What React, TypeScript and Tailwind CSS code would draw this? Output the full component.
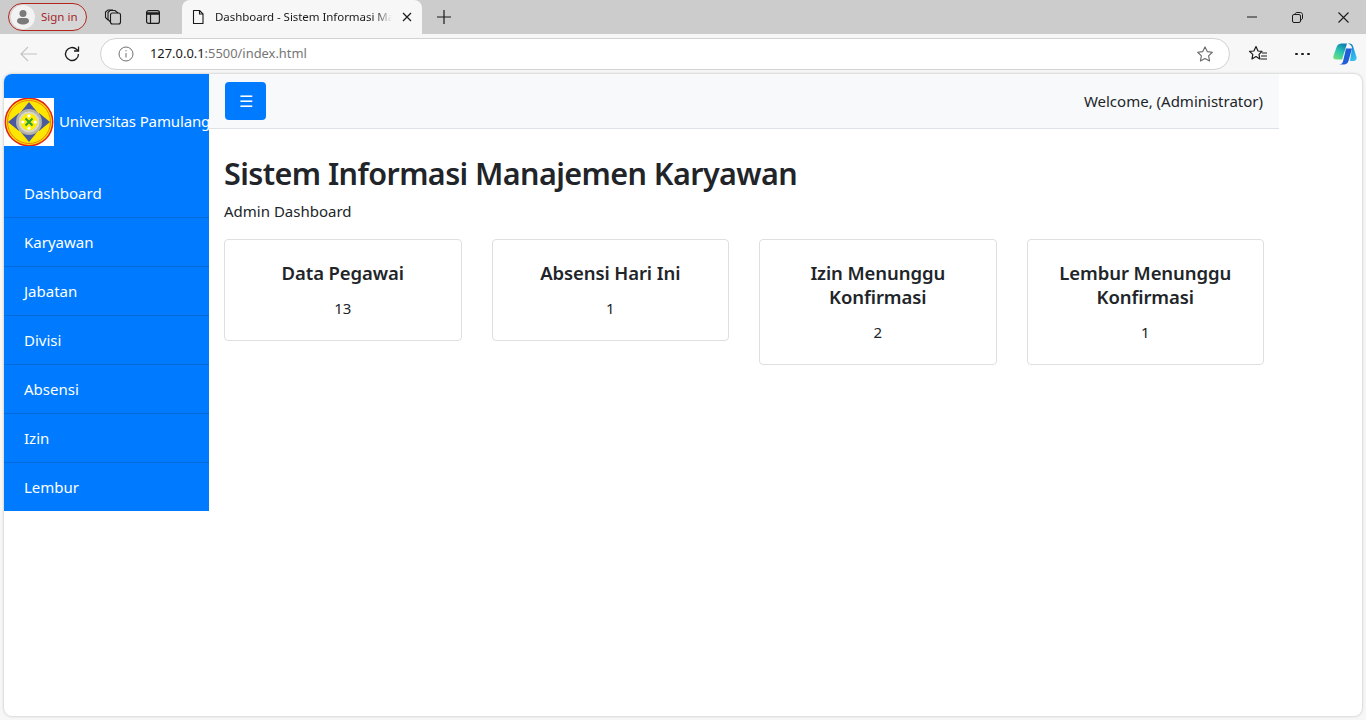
import React from "react";

const menuItems = ["Dashboard", "Karyawan", "Jabatan", "Divisi", "Absensi", "Izin", "Lembur"];

const cards = [
  { title: "Data Pegawai", value: "13" },
  { title: "Absensi Hari Ini", value: "1" },
  { title: "Izin Menunggu Konfirmasi", value: "2" },
  { title: "Lembur Menunggu Konfirmasi", value: "1" },
];

function Logo() {
  return (
    <svg width="50" height="48" viewBox="0 0 50 48" className="shrink-0 bg-white">
      <circle cx="25" cy="24" r="24.500" fill="#e2231a" />
      <circle cx="25" cy="24" r="23" fill="#ffe600" />
      <circle cx="25" cy="24" r="21.500" fill="none" stroke="#e8641a" strokeWidth="0.800" />
      <polygon points="25,4 34,15 16,15" fill="#4a5a9c" />
      <polygon points="25,44 34,33 16,33" fill="#4a5a9c" />
      <polygon points="4,24 15,15 15,33" fill="#4a5a9c" />
      <polygon points="46,24 35,15 35,33" fill="#4a5a9c" />
      <circle cx="25" cy="24" r="13" fill="#b5b3a6" />
      <circle cx="25" cy="24" r="10.500" fill="#d9d7c8" />
      <circle cx="25" cy="24" r="8.500" fill="#ffee00" />
      <path d="M21.500 20.500 L28.500 27.500 M28.500 20.500 L21.500 27.500" stroke="#2f9e35" strokeWidth="2" />
      <circle cx="25" cy="17.800" r="1.600" fill="#ffffff" />
      <circle cx="25" cy="30.200" r="1.600" fill="#ffffff" />
      <circle cx="18.800" cy="24" r="1.600" fill="#ffffff" />
      <circle cx="31.200" cy="24" r="1.600" fill="#ffffff" />
    </svg>
  );
}

function CopilotIcon() {
  return (
    <svg width="24" height="24" viewBox="0 0 24 24">
      <defs>
        <linearGradient id="copA" x1="0.700" y1="0" x2="0.200" y2="1">
          <stop offset="0" stopColor="#0f7fb4" />
          <stop offset="0.500" stopColor="#2cc6b0" />
          <stop offset="1" stopColor="#6ee07a" />
        </linearGradient>
        <linearGradient id="copB" x1="0.300" y1="0" x2="0.800" y2="1">
          <stop offset="0" stopColor="#0e6fb8" />
          <stop offset="0.500" stopColor="#1fa6ea" />
          <stop offset="1" stopColor="#3cc4f0" />
        </linearGradient>
      </defs>
      <path d="M8.500 1.500H14L9 17.500H2.800C1 17.500-.2 15.800.400 14L3.800 4.500C4.500 2.700 6.500 1.500 8.500 1.500z" fill="url(#copA)" />
      <path d="M14 1.500h2.500c1.700 0 3 1 3.500 2.500L23.500 15c.6 2-.9 4-3 4H17L19 6.500C19.300 4 16.500 1.500 14 1.500z" fill="url(#copB)" />
      <path d="M13 6.500h6L15.500 19c-.6 2.200-2.400 3.500-4.500 3.500H6c2 0 3.500-1.300 4-3z" fill="#1e5fd8" />
    </svg>
  );
}

function BrowserChrome() {
  return (
    <div className="text-[#1a1a1a]">
      <div className="flex h-[34px] items-end bg-[#cccccc]">
        <div className="flex h-[34px] w-[182px] items-center pl-2">
          <div className="flex h-[28px] w-[79px] items-center gap-[6px] rounded-full border border-[#b3261e] bg-[#d6d6d6] pl-[2px]">
            <span className="flex h-[24px] w-[24px] items-center justify-center rounded-full bg-[#f2f2f2]">
              <svg width="16" height="16" viewBox="0 0 16 16" fill="#7a7a7a">
                <circle cx="8" cy="4.500" r="3.500" />
                <path d="M2 12c0-2 1.500-3 3-3h6c1.500 0 3 1 3 3 0 2-3 3.500-6 3.500S2 14 2 12z" />
              </svg>
            </span>
            <span className="text-[11.500px] text-[#a4262c]">Sign in</span>
          </div>
          <svg width="20" height="20" viewBox="0 0 20 20" fill="none" stroke="#1a1a1a" strokeWidth="1.100" className="ml-[16px]">
            <rect x="7.500" y="6" width="10" height="11" rx="2" />
            <path d="M7.500 15 5 12.500V5.500L7 3.500h5l3 2.500" />
            <path d="M5 13 2.500 10.500V5L5 3h5" />
          </svg>
          <svg width="16" height="16" viewBox="0 0 16 16" fill="none" stroke="#1a1a1a" strokeWidth="1.200" className="ml-[22px]">
            <rect x="1.600" y="1.600" width="12.800" height="12.800" rx="2" />
            <path d="M1.600 4.500h12.800" strokeWidth="2.500" />
            <path d="M5.500 4.500v10" />
          </svg>
        </div>
        <div className="flex h-[34px] w-[240px] items-center rounded-t-[8px] bg-[#f7f7f7] pl-[8px]">
          <svg width="16" height="16" viewBox="0 0 16 16" fill="none" stroke="#1a1a1a" strokeWidth="1.100">
            <path d="M3.500 1.500h6l3.500 3.500v9.500h-9.500z" strokeLinejoin="round" />
            <path d="M9.500 1.500V5H13" />
          </svg>
          <span className="ml-[9px] w-[177px] whitespace-nowrap text-[11.500px] tracking-[-0.05px] [mask-image:linear-gradient(to_right,black_90%,transparent)]">
            Dashboard - Sistem Informasi Ma
          </span>
          <svg width="10" height="10" viewBox="0 0 10 10" stroke="#1a1a1a" strokeWidth="1.200" className="ml-[10px]">
            <path d="M1 1l8 8M9 1l-8 8" />
          </svg>
        </div>
        <svg width="14" height="14" viewBox="0 0 14 14" stroke="#1a1a1a" strokeWidth="1.200" className="mb-[10px] ml-[15px]">
          <path d="M7 0v14M0 7h14" />
        </svg>
        <div className="ml-auto flex h-[34px] items-center pr-[17px]">
          <svg width="10" height="10" viewBox="0 0 10 10" stroke="#1a1a1a" strokeWidth="1" className="mr-[1px]">
            <path d="M0 5h10" />
          </svg>
          <svg width="11" height="11" viewBox="0 0 11 11" fill="none" stroke="#1a1a1a" strokeWidth="1" className="ml-[34px]">
            <rect x="0.500" y="2.500" width="8" height="8" rx="1.500" />
            <path d="M3 2.500c0-1 .7-2 2-2h3.500c1 0 2 1 2 2V6c0 1.200-1 2-2 2" />
          </svg>
          <svg width="11" height="11" viewBox="0 0 11 11" stroke="#1a1a1a" strokeWidth="1.100" className="ml-[35px]">
            <path d="M.5.500l10 10M10.500.500l-10 10" />
          </svg>
        </div>
      </div>

      <div className="flex h-[40px] items-center bg-[#f7f7f7]">
        <svg width="18" height="16" viewBox="0 0 18 16" fill="none" stroke="#c4c4c4" strokeWidth="1.200" className="ml-[20px]">
          <path d="M17 8H1M8 1 1 8l7 7" />
        </svg>
        <svg width="18" height="18" viewBox="0 0 18 18" fill="none" stroke="#1a1a1a" strokeWidth="1.300" className="ml-[25px]">
          <path d="M15.500 9a6.500 6.500 0 1 1-2-4.700L15.500 6" />
          <path d="M15.500 1.500V6H11" />
        </svg>
        <div className="ml-[19px] flex h-[32px] w-[1130px] items-center rounded-full border border-[#d2d2d2] bg-white">
          <svg width="16" height="16" viewBox="0 0 16 16" fill="none" stroke="#707070" strokeWidth="1" className="ml-[17px]">
            <circle cx="8" cy="8" r="7" />
            <path d="M8 7v4.500M8 4.200v1.200" />
          </svg>
          <span className="ml-[16px] text-[12.900px]">
            127.0.0.1<span className="text-[#767676]">:5500/index.html</span>
          </span>
          <svg width="18" height="18" viewBox="0 0 24 24" fill="none" stroke="#6a6a6a" strokeWidth="1.500" strokeLinejoin="round" className="ml-auto mr-[15px]">
            <path d="M12 2.500l3 6.300 6.800.9-5 4.700 1.300 6.800-6.100-3.300-6.100 3.300 1.300-6.800-5-4.700 6.800-.9z" />
          </svg>
        </div>
        <svg width="20" height="18" viewBox="0 0 20 18" fill="none" stroke="#1a1a1a" strokeWidth="1.200" strokeLinejoin="round" className="ml-[18px]">
          <path d="M8 1.500l2 4.500 4 .4-3 3 .8 4.500-3.800-2.300-4 2.300.8-4.500-3.300-3 4.400-.4z" />
          <path d="M14 8h5M13 11h6M12.500 14h6.500" />
        </svg>
        <span className="ml-[27px] flex items-center gap-[2px]">
          <span className="h-[2.500px] w-[2.500px] rounded-full bg-[#1a1a1a]" />
          <span className="ml-[1.500px] h-[2.500px] w-[2.500px] rounded-full bg-[#1a1a1a]" />
          <span className="ml-[1.500px] h-[2.500px] w-[2.500px] rounded-full bg-[#1a1a1a]" />
        </span>
        <span className="ml-[23px]">
          <CopilotIcon />
        </span>
      </div>
    </div>
  );
}

export default function App() {
  return (
    <div className="flex h-[720px] w-[1366px] flex-col overflow-hidden bg-[#f7f7f7] font-['Noto_Sans',sans-serif]">
      <BrowserChrome />
      <div className="mx-[4px] mb-[4px] flex flex-1 items-start overflow-hidden rounded-[8px] bg-white shadow-[0_0_3px_rgba(0,0,0,0.25)]">
        <aside className="h-[437px] w-[205px] shrink-0 bg-[#007bff] text-white">
          <div className="flex items-center pt-[24px]">
            <Logo />
            <span className="mb-[2px] ml-[5px] whitespace-nowrap text-[15px] tracking-[-0.14px]">Universitas Pamulang</span>
          </div>
          <ul className="mt-[23px]">
            {menuItems.map((item, i) => (
              <li
                key={item}
                className={`flex h-[49px] items-center pl-[20px] text-[15px] ${
                  i < menuItems.length - 1 ? "border-b border-[#0069d9] pt-px" : ""
                }`}
              >
                {item}
              </li>
            ))}
          </ul>
        </aside>

        <main className="w-[1070px] shrink-0 text-[#212529]">
          <header className="flex h-[55px] items-center justify-between border-b border-[#dee2e6] bg-[#f8f9fa] px-[16px]">
            <button className="h-[38px] w-[41px] rounded-[4px] bg-[#007bff] text-[16px] text-white">☰</button>
            <span className="pt-[1px] text-[15px]">Welcome, (Administrator)</span>
          </header>
          <div className="px-[15px] pt-[25px]">
            <h1 className="text-[30.500px] font-semibold leading-[38px] tracking-[-0.57px]">
              Sistem Informasi Manajemen Karyawan
            </h1>
            <p className="mt-[7px] text-[15px] leading-[24px]">Admin Dashboard</p>
            <div className="mt-[16px] grid grid-cols-4 items-start gap-x-[30px]">
              {cards.map((card) => (
                <div key={card.title} className="rounded-[4px] border border-[#dfdfdf] bg-white px-[20px] pb-[20px] pt-[21px] text-center">
                  <h5 className="mb-[11px] text-[18.500px] font-semibold leading-[24px] tracking-[-0.1px]">{card.title}</h5>
                  <p className="text-[15px] leading-[24px]">{card.value}</p>
                </div>
              ))}
            </div>
          </div>
        </main>
      </div>
    </div>
  );
}
